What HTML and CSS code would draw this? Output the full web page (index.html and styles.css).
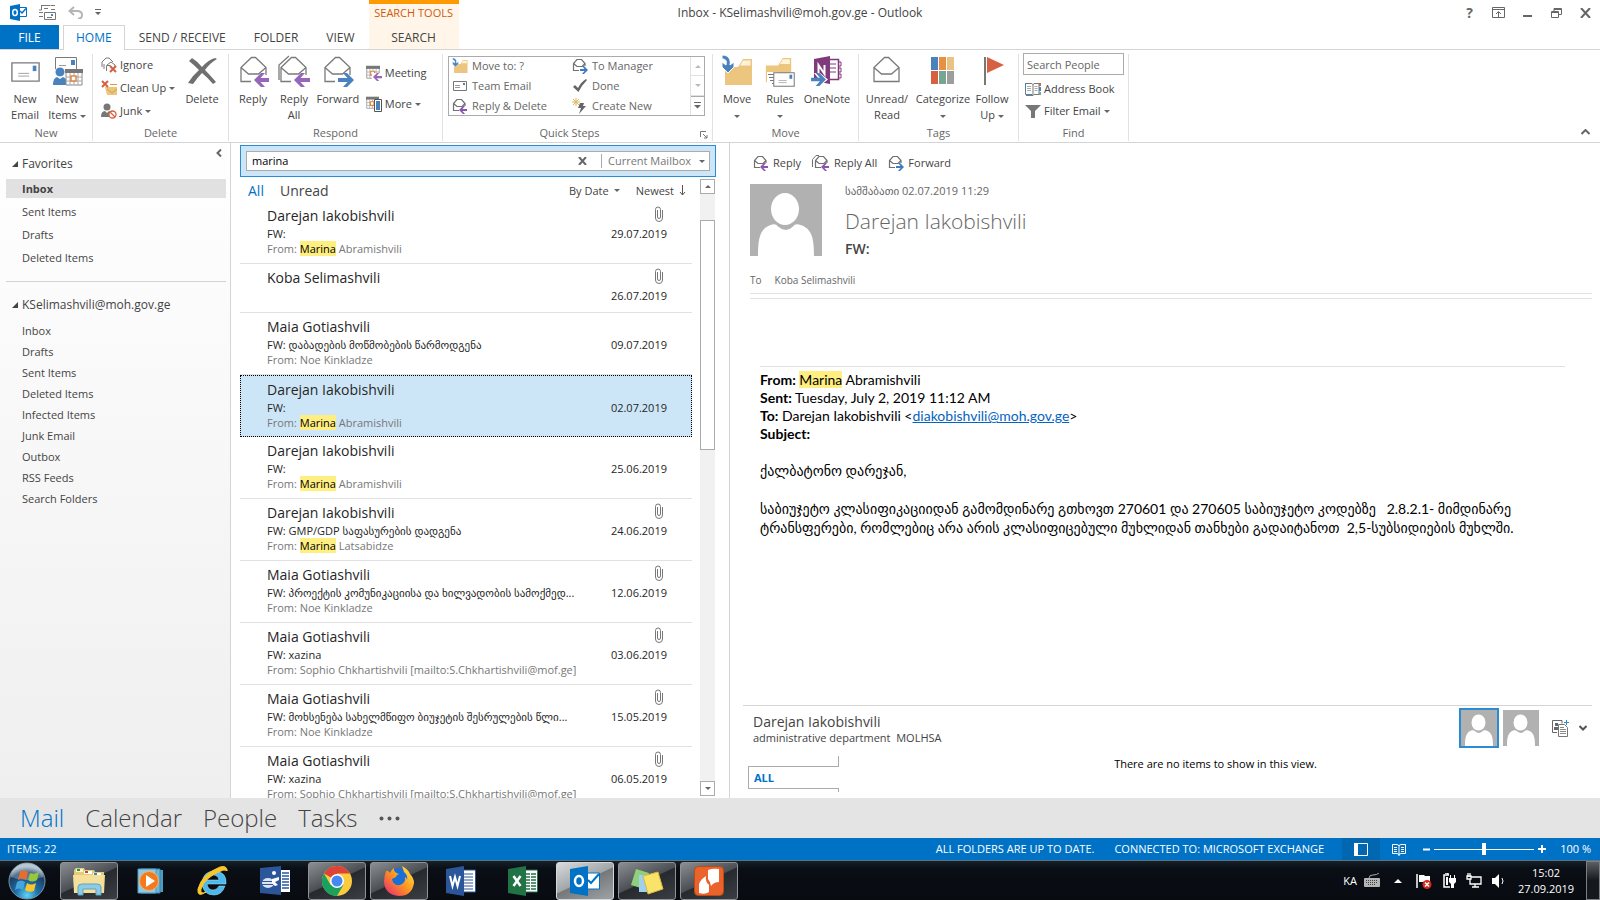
FILE: index.html
```html
<!DOCTYPE html>
<html lang="en">
<head>
    <meta charset="UTF-8">
    <meta name="viewport" content="width=device-width, initial-scale=1.0">
    <title>Inbox - KSelimashvili@moh.gov.ge - Outlook</title>
    <link rel="stylesheet" href="styles.css">
</head>
<body>
    <!-- shared icons -->
    <svg class="defs" width="0" height="0">
        <symbol id="i-open" viewBox="0 0 32 32">
            <path d="M2 12.500 12.500 2.500h4L27 12.500V26.500H2zM2 12.500l7.500 6.500h10L27 12.500" fill="#fff" stroke="#7a7a7a" stroke-width="1.300"/>
        </symbol>
        <symbol id="i-left" viewBox="0 0 16 14">
            <path d="M0 7 7 0h4L6.500 5H16v4H6.500L11 14H7z" fill="#9766bb"/>
        </symbol>
        <symbol id="i-right" viewBox="0 0 16 14">
            <path d="M16 7 9 0H5l4.500 5H0v4h9.500L5 14h4z" fill="#4a82bd"/>
        </symbol>
        <symbol id="i-reply" viewBox="0 0 32 32">
            <use href="#i-open" width="32" height="32"/>
            <path d="M12 20h20v12H12z" fill="#fff"/>
            <use href="#i-left" x="15" y="18" width="16" height="14"/>
        </symbol>
        <symbol id="i-replyall" viewBox="0 0 34 32">
            <path d="M2 25V10L12 1" fill="none" stroke="#7a7a7a" stroke-width="1.300"/>
            <use href="#i-open" x="2" width="32" height="32"/>
            <path d="M14 20h20v12H14z" fill="#fff"/>
            <use href="#i-left" x="17" y="18" width="16" height="14"/>
        </symbol>
        <symbol id="i-forward" viewBox="0 0 32 32">
            <use href="#i-open" width="32" height="32"/>
            <path d="M12 20h20v12H12z" fill="#fff"/>
            <use href="#i-right" x="15" y="18" width="16" height="14"/>
        </symbol>
        <!-- 16px envelopes -->
        <symbol id="s-open" viewBox="0 0 16 16">
            <path d="M7 12.500H1.500V5.500L5 1.500h4.500l3.500 4V8M1.500 5.500l3.500 3h5l3-3" fill="none" stroke="#707070" stroke-width="1.200"/>
        </symbol>
        <symbol id="s-reply" viewBox="0 0 16 16">
            <use href="#s-open" width="16" height="16"/>
            <path d="m7 12 4-4h2l-2.500 3H15v2h-4.500l2.500 3h-2z" fill="#8b55ae"/>
        </symbol>
        <symbol id="s-replyall" viewBox="0 0 18 16">
            <path d="M.500 12V4.500L4 .500h3" fill="none" stroke="#707070"/>
            <use href="#s-reply" x="2" width="16" height="16"/>
        </symbol>
        <symbol id="s-forward" viewBox="0 0 16 16">
            <use href="#s-open" width="16" height="16"/>
            <path d="m16 12-4-4h-2l2.500 3H8v2h4.500L10 16h2z" fill="#3f7cbc"/>
        </symbol>
        <symbol id="i-folder" viewBox="0 0 32 32">
            <path d="M2 10h13l5-8h9v26H2z" fill="#ecc57f"/>
            <path d="M17 8.500 20 3.500h7.500v5z" fill="#fff3d9"/>
        </symbol>
        <symbol id="i-moveto" viewBox="0 0 32 32">
            <use href="#i-folder" x="2" y="2" width="32" height="32"/>
            <path d="M1 0c7 0 9 5 8 10l4-3v5l-6 6-6-6V7l4 3c1-4 0-6-4-6z" fill="#4a82bd" stroke="#fff"/>
        </symbol>
        <symbol id="i-mail" viewBox="0 0 32 22">
            <path d="M1 1h30v20H1z" fill="#fff" stroke="#7a7a7a" stroke-width="1.500"/>
            <path d="M24 4h4v6h-4z" fill="#4a82bd"/>
            <path d="M8 12.500h12M8 15.500h12" stroke="#9a9a9a"/>
        </symbol>
        <symbol id="i-cal" viewBox="0 0 18 18">
            <path d="M1 2h16v15H1z" fill="#fff" stroke="#8a8a8a"/>
            <path d="M0 1h18v4H0z" fill="#777"/>
            <path d="M1 9h16M1 13h16M5 5v12M9 5v12M13 5v12" stroke="#a8a8a8"/>
            <path d="M6 8h5v5H6z" fill="#fff" stroke="#e08641" stroke-width="1.500"/>
        </symbol>
        <symbol id="i-clip" viewBox="0 0 8 16">
            <path d="M2.500 4v7a1.500 1.500 0 0 0 3 0V3.500a2.500 2.500 0 0 0-5 0V12a3.500 3.500 0 0 0 7 0V4" fill="none" stroke="#777"/>
        </symbol>
        <symbol id="i-person" viewBox="0 0 72 72">
            <path d="M0 0h72v72H0z" fill="#b1b1b1"/>
            <ellipse cx="35" cy="25" rx="14" ry="16" fill="#fff"/>
            <path d="M8 72C8 54 10 44 22 40.500q4-1 6 2 8 7 15 0 2-3 6-2C62 44 64 54 64 72z" fill="#fff"/>
        </symbol>
    </svg>

    <header class="titlebar">
        <div class="quick">
            <svg width="17" height="17" viewBox="0 0 17 17"><path d="M0 2 10 0v17L0 15z" fill="#0072c6"/><path d="M10 3.500h6.500v9H10" fill="#fff" stroke="#0072c6"/><path d="m10 7 2 2 4-4.500" fill="none" stroke="#0072c6" stroke-width="1.500"/><ellipse cx="5" cy="8.500" rx="2.300" ry="3" fill="none" stroke="#fff" stroke-width="1.500"/></svg>
            <svg width="17" height="17" viewBox="0 0 17 17" fill="#fff" stroke="#777"><path d="M2.500 1.500h9M12 1.500h4M2.500 1v5H0M12 5.500h4M5.500 8.500h11v7h-11zM0 8.500h4M0 12.500h4"/><path d="M8 13.500h5M5 4.500h4"/><path d="M12 10h2v2h-2z" fill="#4a82bd" stroke="none"/></svg>
            <svg width="15" height="13" viewBox="0 0 15 13"><path d="M6 1 1.500 5 6 9M2 5h7q5 0 5 4t-4 3.500" fill="none" stroke="#b5b5b5" stroke-width="2"/></svg>
            <svg width="6" height="7" viewBox="0 0 6 7"><path d="M0 0h6v1H0zM0 3h6L3 6z" fill="#666"/></svg>
        </div>
        <p class="title">Inbox - KSelimashvili@moh.gov.ge - Outlook</p>
        <div class="window-buttons">
            <button aria-label="Help"><b>?</b></button>
            <button aria-label="Ribbon options"><svg width="13" height="11" viewBox="0 0 13 11" fill="none" stroke="#666"><path d="M.5.5h12v10H.5zM0 2.500h13M6.500 10V5M4 7l2.500-2.500L9 7"/></svg></button>
            <button aria-label="Minimize"><svg width="9" height="11" viewBox="0 0 9 11"><path d="M0 8h9v2H0z" fill="#666"/></svg></button>
            <button aria-label="Restore"><svg width="11" height="10" viewBox="0 0 11 10" fill="none" stroke="#666"><path d="M.5 3.500h7v6h-7zM0 4.500h8M3 3V.5h7.500v6H8M3 1.500h7"/></svg></button>
            <button aria-label="Close"><svg width="11" height="10" viewBox="0 0 11 10"><path d="m1 0 9 10M10 0 1 10" stroke="#666" stroke-width="2"/></svg></button>
        </div>
    </header>

    <nav class="tabs">
        <button class="tab file">FILE</button>
        <button class="tab active">HOME</button>
        <button class="tab">SEND / RECEIVE</button>
        <button class="tab">FOLDER</button>
        <button class="tab">VIEW</button>
        <div class="context-tab">
            <span>SEARCH TOOLS</span>
            <button class="tab">SEARCH</button>
        </div>
    </nav>

    <section class="ribbon">
        <div class="group g-new">
            <div class="tools">
                <button class="big w42">
                    <svg width="32" height="34" viewBox="0 0 32 34"><use href="#i-mail" x="2" y="8" width="29" height="20"/></svg>
                    New<br>Email
                </button>
                <button class="big w42">
                    <svg width="32" height="34" viewBox="0 0 32 34"><path d="M4.500 3.500h21v14h-21z" fill="#fff" stroke="#7a7a7a"/><path d="M20 6h4v5h-4z" fill="#4a82bd"/><path d="M8 11.500h7" stroke="#999"/><circle cx="9" cy="18" r="5" fill="#4a82bd" stroke="#fff"/><path d="M2 31q0-7 4-8l3 2 3-2q4 1 4 8z" fill="#4a82bd"/><use href="#i-cal" x="14" y="14" width="18" height="18"/></svg>
                    New<br>Items <i class="down"></i>
                </button>
            </div>
            <h3>New</h3>
        </div>
        <div class="group g-delete">
            <div class="tools">
                <div class="smalls">
                    <button><svg width="16" height="16" viewBox="0 0 16 16"><path d="M1 10V5l4-4h3l4 4M3 12V7M5.500 14V8.500h4M6 8l4-3 4 3v3" fill="none" stroke="#7a7a7a"/><path d="m9 9 6 6M15 9l-6 6" stroke="#d75f42" stroke-width="2"/></svg>Ignore</button>
                    <button><svg width="16" height="16" viewBox="0 0 16 16"><path d="M4 7h12v8H6z" fill="#ecc57f"/><path d="m6 9 5 4 5-4M9 4.500h7" fill="none" stroke="#d69d45"/><path d="m1 1 6 6M7 1 1 7" stroke="#d75f42" stroke-width="2"/></svg>Clean Up<i class="down"></i></button>
                    <button><svg width="16" height="16" viewBox="0 0 16 16"><circle cx="6" cy="4" r="3.500" fill="#777"/><path d="M0 14q0-6 4-6l2 2 2-2q3 0 3 6z" fill="#777"/><circle cx="11.500" cy="11.500" r="3.500" fill="#fff" stroke="#d75f42" stroke-width="1.300"/><path d="m9 9 5 5" stroke="#d75f42" stroke-width="1.300"/></svg>Junk<i class="down"></i></button>
                </div>
                <button class="big w42">
                    <svg width="32" height="34" viewBox="0 0 32 34"><path d="m3 7 3-3q5 3 10 9Q22 6 29 4l2 1q-7 4-12 11 5 5 11 12l-3 2q-6-7-11-11-4 4-9 11l-5-1q5-8 11-13-5-5-10-9z" fill="#707070"/></svg>
                    Delete
                </button>
            </div>
            <h3>Delete</h3>
        </div>
        <div class="group g-respond">
            <div class="tools">
                <button class="big w42"><svg width="32" height="34"><use href="#i-reply" x="2" y="1" width="32" height="32"/></svg>Reply</button>
                <button class="big w42"><svg width="34" height="34"><use href="#i-replyall" y="1" width="34" height="32"/></svg>Reply<br>All</button>
                <button class="big w48"><svg width="32" height="34"><use href="#i-forward" x="1" y="1" width="32" height="32"/></svg>Forward</button>
                <div class="smalls two">
                    <button><svg width="16" height="16" viewBox="0 0 16 16"><use href="#i-cal" width="14" height="14"/><path d="M6 8h10v8H6z" fill="#fff"/><use href="#i-left" x="7" y="8" width="9" height="8"/></svg>Meeting</button>
                    <button><svg width="16" height="16" viewBox="0 0 16 16"><use href="#i-cal" width="13" height="13"/><path d="M8.500 3.500h7v12h-7z" fill="#fff" stroke="#555"/><path d="M10 5h4v9h-4z" fill="#4a82bd"/></svg>More<i class="down"></i></button>
                </div>
            </div>
            <h3>Respond</h3>
        </div>
        <div class="group g-steps">
            <div class="tools">
                <div class="gallery">
                    <div class="steps">
                        <button><svg width="16" height="16"><use href="#i-moveto" width="16" height="16"/></svg>Move to: ?</button>
                        <button><svg width="16" height="16"><use href="#s-forward"/></svg>To Manager</button>
                        <button><svg width="16" height="16" viewBox="0 0 16 16"><path d="M1.500 3.500h13v9h-13z" fill="#fff" stroke="#777"/><path d="M11 5h2v2h-2z" fill="#4a82bd"/><path d="M3 7.500h5M3 9.500h5" stroke="#999"/></svg>Team Email</button>
                        <button><svg width="16" height="16" viewBox="0 0 16 16"><path d="m1 9 2-2 3 3q3-6 8-9l1 1Q10 7 6.500 14z" fill="#666"/></svg>Done</button>
                        <button><svg width="16" height="16"><use href="#s-reply"/></svg>Reply &amp; Delete</button>
                        <button><svg width="16" height="16" viewBox="0 0 16 16"><path d="M4 0v8M0 4h8M1 1l6 6M7 1 1 7" stroke="#e2b45d"/><path d="M8 5h4l-1 3h3l-7 8 2-6H6z" fill="#666"/></svg>Create New</button>
                    </div>
                    <div class="gallery-bar">
                        <button aria-label="Up"><i class="up pale"></i></button>
                        <button aria-label="Down"><i class="down pale"></i></button>
                        <button aria-label="More steps" class="more"><svg width="7" height="7" viewBox="0 0 7 7"><path d="M0 0h7v1H0zM0 3h7L3.500 6.500z" fill="#666"/></svg></button>
                    </div>
                </div>
            </div>
            <h3>Quick Steps</h3>
            <svg class="launcher" width="8" height="8" viewBox="0 0 8 8"><path d="M.5 6V.5H6M3 3l4 4M7 4v3H4" fill="none" stroke="#777"/></svg>
        </div>
        <div class="group g-move">
            <div class="tools">
                <button class="big w48"><svg width="32" height="34"><use href="#i-moveto" y="1" width="32" height="32"/></svg>Move<br><i class="down"></i></button>
                <button class="big w38"><svg width="32" height="34" viewBox="0 0 32 34"><use href="#i-folder" x="0" y="2" width="30" height="30"/><path d="M3 18h10v14H3z" fill="#fff"/><path d="M4 20.500h8M5 23.500h7M6 26.500h6M8 29.500h4" stroke="#777"/><use href="#i-mail" x="9" y="18" width="22" height="15"/></svg>Rules<br><i class="down"></i></button>
                <button class="big w56"><svg width="32" height="34" viewBox="0 0 32 34"><path d="M15 5.500h12.500v20H15" fill="#fff" stroke="#80397b" stroke-width="1.500"/><path d="M27 8h3v4h-3M27 14h3v4h-3M27 20h3v4h-3M19 10h6M19 14h6M19 18h6" fill="none" stroke="#80397b"/><path d="M3 5 19 2v28L3 27z" fill="#80397b"/><path d="M7.500 20v-9l6 9v-9" fill="none" stroke="#fff" stroke-width="2"/><path d="M0 24h7l-4-5h6l8 6.500L9 32H3l4-4H0z" fill="#fff"/><use href="#i-right" x="0" y="19" width="15" height="13"/></svg>OneNote</button>
            </div>
            <h3>Move</h3>
        </div>
        <div class="group g-tags">
            <div class="tools">
                <button class="big w56"><svg width="30" height="34"><use href="#i-open" y="1" width="32" height="32"/></svg>Unread/<br>Read</button>
                <button class="big w56"><svg width="26" height="34" viewBox="0 0 26 34"><path d="M1 3h7v13H1z" fill="#4a82bd"/><path d="M9 3h7v13H9z" fill="#e69044"/><path d="M17 3h7v13h-7z" fill="#eac282"/><path d="M1 17h7v13H1z" fill="#d75f42"/><path d="M9 17h7v13H9z" fill="#78a591"/><path d="M17 17h7v13h-7z" fill="#9d9d9d"/></svg>Categorize<br><i class="down"></i></button>
                <button class="big w42"><svg width="24" height="34" viewBox="0 0 24 34"><path d="M4 3h2v28H4z" fill="#777"/><path d="m7 3 17 8-17 8z" fill="#d75f42"/></svg>Follow<br>Up <i class="down"></i></button>
            </div>
            <h3>Tags</h3>
        </div>
        <div class="group g-find">
            <div class="tools find">
                <input type="text" placeholder="Search People" aria-label="Search People">
                <button><svg width="16" height="15" viewBox="0 0 16 15"><path d="M.5 1.500H7l1 1 1-1h5v11H9l-1 1-1-1H.500zM8 2v11" fill="#fff" stroke="#777"/><path d="M2 4.500h4M2 6.500h4M2 8.500h4M9.500 4.500h3M9.500 6.500h3M9.500 8.500h3" stroke="#aaa"/><path d="M0 1h1v13h7v-1H1z" fill="#4a82bd"/><path d="M14 1h2v3h-2z" fill="#d75f42"/><path d="M14 5h2v4h-2z" fill="#4a82bd"/><path d="M14 10h2v3h-2z" fill="#78a591"/></svg>Address Book</button>
                <button><svg width="16" height="15" viewBox="0 0 16 15"><path d="M0 1h16l-6 6v7H6V7z" fill="#777"/></svg>Filter Email<i class="down"></i></button>
            </div>
            <h3>Find</h3>
        </div>
        <button class="collapse" aria-label="Collapse the ribbon"><svg width="9" height="6" viewBox="0 0 9 6"><path d="m.5 5 4-4 4 4" fill="none" stroke="#666" stroke-width="2"/></svg></button>
    </section>

    <main class="panes">
        <aside class="folders">
            <button class="fold" aria-label="Minimize the folder pane"><svg width="6" height="8" viewBox="0 0 6 8"><path d="M5 .5 1.500 4 5 7.500" fill="none" stroke="#666" stroke-width="2"/></svg></button>
            <h2>Favorites</h2>
            <ul class="favorites">
                <li><a href="#" class="current">Inbox</a></li>
                <li><a href="#">Sent Items</a></li>
                <li><a href="#">Drafts</a></li>
                <li><a href="#">Deleted Items</a></li>
            </ul>
            <h2 class="account">KSelimashvili@moh.gov.ge</h2>
            <ul>
                <li><a href="#">Inbox</a></li>
                <li><a href="#">Drafts</a></li>
                <li><a href="#">Sent Items</a></li>
                <li><a href="#">Deleted Items</a></li>
                <li><a href="#">Infected Items</a></li>
                <li><a href="#">Junk Email</a></li>
                <li><a href="#">Outbox</a></li>
                <li><a href="#">RSS Feeds</a></li>
                <li><a href="#">Search Folders</a></li>
            </ul>
        </aside>

        <section class="list">
            <div class="search">
                <div class="search-box">
                    <input type="text" value="marina" aria-label="Search mailbox">
                    <button aria-label="Clear search"><svg width="9" height="8" viewBox="0 0 9 8"><path d="m1 0 7 8M8 0 1 8" stroke="#666" stroke-width="2"/></svg></button>
                    <select aria-label="Search scope"><option>Current Mailbox</option></select>
                    <i class="down"></i>
                </div>
            </div>
            <div class="list-body">
                <div class="list-main">
                    <div class="filters">
                        <button class="filter on">All</button>
                        <button class="filter">Unread</button>
                        <button class="sort">By Date <i class="down"></i></button>
                        <button class="sort">Newest <svg width="7" height="11" viewBox="0 0 7 11"><path d="M3.500 0v10M1 7l2.500 3L6 7" fill="none" stroke="#555"/></svg></button>
                    </div>
                    <ul class="messages">
                        <li>
                            <h4>Darejan Iakobishvili</h4><svg class="clip"><use href="#i-clip"/></svg>
                            <p class="subject">FW:</p><time>29.07.2019</time>
                            <p class="preview">From: <mark>Marina</mark> Abramishvili</p>
                        </li>
                        <li class="short">
                            <h4>Koba Selimashvili</h4><svg class="clip"><use href="#i-clip"/></svg>
                            <p class="subject"></p><time>26.07.2019</time>
                        </li>
                        <li>
                            <h4>Maia Gotiashvili</h4>
                            <p class="subject">FW: დაბადების მოწმობების წარმოდგენა</p><time>09.07.2019</time>
                            <p class="preview">From: Noe Kinkladze</p>
                        </li>
                        <li class="selected">
                            <h4>Darejan Iakobishvili</h4>
                            <p class="subject">FW:</p><time>02.07.2019</time>
                            <p class="preview">From: <mark>Marina</mark> Abramishvili</p>
                        </li>
                        <li>
                            <h4>Darejan Iakobishvili</h4>
                            <p class="subject">FW:</p><time>25.06.2019</time>
                            <p class="preview">From: <mark>Marina</mark> Abramishvili</p>
                        </li>
                        <li>
                            <h4>Darejan Iakobishvili</h4><svg class="clip"><use href="#i-clip"/></svg>
                            <p class="subject">FW: GMP/GDP საფასურების დადგენა</p><time>24.06.2019</time>
                            <p class="preview">From: <mark>Marina</mark> Latsabidze</p>
                        </li>
                        <li>
                            <h4>Maia Gotiashvili</h4><svg class="clip"><use href="#i-clip"/></svg>
                            <p class="subject">FW: პროექტის კომუნიკაციისა და ხილვადობის სამოქმედ...</p><time>12.06.2019</time>
                            <p class="preview">From: Noe Kinkladze</p>
                        </li>
                        <li>
                            <h4>Maia Gotiashvili</h4><svg class="clip"><use href="#i-clip"/></svg>
                            <p class="subject">FW: xazina</p><time>03.06.2019</time>
                            <p class="preview">From: Sophio Chkhartishvili [mailto:S.Chkhartishvili@mof.ge]</p>
                        </li>
                        <li>
                            <h4>Maia Gotiashvili</h4><svg class="clip"><use href="#i-clip"/></svg>
                            <p class="subject">FW: მოხსენება სახელმწიფო ბიუჯეტის შესრულების წლი...</p><time>15.05.2019</time>
                            <p class="preview">From: Noe Kinkladze</p>
                        </li>
                        <li>
                            <h4>Maia Gotiashvili</h4><svg class="clip"><use href="#i-clip"/></svg>
                            <p class="subject">FW: xazina</p><time>06.05.2019</time>
                            <p class="preview">From: Sophio Chkhartishvili [mailto:S.Chkhartishvili@mof.ge]</p>
                        </li>
                    </ul>
                </div>
                <div class="scrollbar">
                    <button aria-label="Scroll up"><i class="up"></i></button>
                    <div class="track"><div class="thumb"></div></div>
                    <button aria-label="Scroll down"><i class="down"></i></button>
                </div>
            </div>
        </section>

        <section class="reading">
            <div class="actions">
                <button><svg width="16" height="16"><use href="#s-reply"/></svg>Reply</button>
                <button><svg width="18" height="16"><use href="#s-replyall"/></svg>Reply All</button>
                <button><svg width="16" height="16"><use href="#s-forward"/></svg>Forward</button>
            </div>
            <div class="sender">
                <svg width="72" height="72"><use href="#i-person"/></svg>
                <div>
                    <p class="sent">სამშაბათი 02.07.2019 11:29</p>
                    <h1>Darejan Iakobishvili</h1>
                    <p class="fw">FW:</p>
                </div>
            </div>
            <p class="to"><span>To</span>Koba Selimashvili</p>
            <article class="message">
                <div class="headers">
                    <p><b>From:</b> <mark>Marina</mark> Abramishvili</p>
                    <p><b>Sent:</b> Tuesday, July 2, 2019 11:12 AM</p>
                    <p><b>To:</b> Darejan Iakobishvili &lt;<a href="#">diakobishvili@moh.gov.ge</a>&gt;</p>
                    <p><b>Subject:</b></p>
                </div>
                <p lang="ka">ქალბატონო დარეჯან,</p>
                <p lang="ka">საბიუჯეტო კლასიფიკაციიდან გამომდინარე გთხოვთ 270601 და 270605 საბიუჯეტო კოდებზე &nbsp; 2.8.2.1- მიმდინარე<br>ტრანსფერები, რომლებიც არა არის კლასიფიცებული მუხლიდან თანხები გადაიტანოთ &nbsp;2,5-სუბსიდიების მუხლში.</p>
            </article>
            <footer class="people">
                <div class="people-head">
                    <div class="who">
                        <h4>Darejan Iakobishvili</h4>
                        <p>administrative department&nbsp; MOLHSA</p>
                    </div>
                    <svg class="face on"><use href="#i-person"/></svg>
                    <svg class="face"><use href="#i-person"/></svg>
                    <svg width="17" height="17" viewBox="0 0 17 17"><path d="M10 3.500V.5H.5v12H5" fill="none" stroke="#666"/><path d="M3 3h3v3H3zM2 7h4v3H2z" fill="#666"/><path d="M6.500 4.500h6l3 3v9h-9z" fill="#fff" stroke="#777"/><path d="M8 7.500h4M8 9.500h6M8 11.500h6M8 13.500h6" stroke="#888"/><path d="M12 2.500h5M14.500 0v5" stroke="#2a8dd4"/></svg>
                    <button aria-label="Expand people pane"><svg width="8" height="6" viewBox="0 0 8 6"><path d="m.5 1 3.500 3.500L7.500 1" fill="none" stroke="#555" stroke-width="2"/></svg></button>
                </div>
                <div class="people-body">
                    <div class="people-tabs">
                        <button class="all">ALL</button>
                    </div>
                    <p>There are no items to show in this view.</p>
                </div>
            </footer>
        </section>
    </main>

    <nav class="modules">
        <a href="#" class="on">Mail</a>
        <a href="#">Calendar</a>
        <a href="#">People</a>
        <a href="#">Tasks</a>
        <button aria-label="More"><svg width="21" height="5" viewBox="0 0 21 5" fill="#555"><circle cx="2.500" cy="2.500" r="2"/><circle cx="10.500" cy="2.500" r="2"/><circle cx="18.500" cy="2.500" r="2"/></svg></button>
    </nav>

    <div class="status">
        <span class="items">ITEMS: 22</span>
        <span>ALL FOLDERS ARE UP TO DATE.</span>
        <span class="conn">CONNECTED TO: MICROSOFT EXCHANGE</span>
        <button class="view on" aria-label="Normal view"><svg width="14" height="13" viewBox="0 0 14 13"><path d="M.5.5h13v12H.5z" fill="none" stroke="#fff"/><path d="M0 0h4v13H0z" fill="#fff"/></svg></button>
        <button class="view" aria-label="Reading view"><svg width="14" height="13" viewBox="0 0 14 13" fill="none" stroke="#fff"><path d="M.5 1.500H5l2 1 2-1h4.500v9H9l-2 1-2-1H.5zM7 2v11M2 4.500h3M2 6.500h3M2 8.500h3M9 4.500h3M9 6.500h3M9 8.500h3"/></svg></button>
        <div class="zoom">
            <button aria-label="Zoom out"><svg width="7" height="7" viewBox="0 0 7 7"><path d="M0 2.500h7v2H0z" fill="#fff"/></svg></button>
            <input type="range" min="0" max="100" value="50" aria-label="Zoom">
            <button aria-label="Zoom in"><svg width="8" height="8" viewBox="0 0 8 8"><path d="M0 3h8v2H0zM3 0h2v8H3z" fill="#fff"/></svg></button>
        </div>
        <span>100 %</span>
    </div>

    <footer class="taskbar">
        <button class="start" aria-label="Start">
            <svg width="40" height="38" viewBox="0 0 40 38">
                <defs><radialGradient id="orb" cx=".5" cy=".9" r=".8"><stop offset="0" stop-color="#5fd4f5"/><stop offset=".4" stop-color="#1f6ea8"/><stop offset=".8" stop-color="#1b3f63"/><stop offset="1" stop-color="#9fb6c6"/></radialGradient></defs>
                <circle cx="20" cy="19" r="18" fill="url(#orb)" stroke="#7895a6"/>
                <path d="M4 15a16 14 0 0 1 32 0q-16 6-32 0z" fill="#fff" opacity=".25"/>
                <path d="M13 10q4-3 8 0l-2 8q-4-3-8 0z" fill="#ec6a2c"/><path d="M23 11q4 2 9-1l-2 8q-5 3-9 0z" fill="#94c83d"/>
                <path d="M10 20q4-3 8 0l-2 8q-4-3-8 0z" fill="#46a5dc"/><path d="M20 21q4 3 9 0l-2 8q-5 2-9-1z" fill="#fbc52d"/>
            </svg>
        </button>
        <button class="task open" aria-label="Explorer">
            <svg width="34" height="30" viewBox="0 0 34 30"><path d="M2 4 4 2h8l1 2h9l1 2h9v21H2z" fill="#e5cb76"/><path d="M4 3h7v3H4z" fill="#f7f3dc"/><path d="M5 3h3v2H5z" fill="#18a13a"/><path d="M12 5h8v3h-8z" fill="#fff"/><path d="M13 5h3v2h-3z" fill="#d2452f"/><path d="M21 7h8v3h-8z" fill="#fff"/><path d="M22 7h3v2h-3z" fill="#2a8fd0"/><path d="M1 9h32l-1 18H2z" fill="#f4e09b"/><path d="M6 29v-8q0-3 4-3h15q4 0 4 3v8h-5v-6H11v6z" fill="#8dcbe6" stroke="#5ba5c6"/></svg>
        </button>
        <button class="task" aria-label="Media Player">
            <svg width="28" height="28" viewBox="0 0 28 28"><path d="M8 3h18v22H8z" fill="#4b9cc4"/><path d="M4 2h19v24H4z" fill="#6db7d9" stroke="#3d86ac"/><path d="M1 2h18v24H1z" fill="#8fc9e4" stroke="#4e99bd"/><circle cx="12" cy="14" r="9.500" fill="#f27a1c" stroke="#fbb06d"/><path d="m9 8 9 6-9 6z" fill="#fff"/></svg>
        </button>
        <button class="task" aria-label="Internet Explorer">
            <svg width="32" height="32" viewBox="0 0 32 32"><path d="M28 21h-6q-2 4-6 4-5 0-6-6h19Q30 7 18 6 6 6 5 18q1 12 12 12 8 0 11-9zM10 15q1-5 6-5 5 0 6 5z" fill="#4bb8ee" stroke="#b5e5fb" stroke-width=".5"/><path d="M24 5q6-4 6 1-1-3-6 0Q8 12 4 24q-1 6 5 3-9 6-8-3Q5 9 23 2q7-2 7 4" fill="#f6c62c" stroke="#f6c62c"/></svg>
        </button>
        <button class="task" aria-label="Dictionary">
            <svg width="32" height="30" viewBox="0 0 32 30"><path d="M21 4h10v22H21z" fill="#fff"/><path d="M23 7h7M23 10h7M23 13h7M23 16h7M23 19h7M23 22h7" stroke="#2b579a" stroke-width="1.500"/><path d="M1 2 22 0v29L1 27z" fill="#2b579a"/><ellipse cx="9" cy="17" rx="6" ry="5" fill="#dbe5f4"/><path d="M3 15.500h11M3 18.500h11" stroke="#2b579a"/><path d="m13 13 7-2v3l-4 2 3 3-3 1-3-3z" fill="#fff"/><circle cx="15" cy="7" r="2" fill="#fff"/></svg>
        </button>
        <button class="task open" aria-label="Chrome">
            <svg width="30" height="30" viewBox="0 0 30 30"><circle cx="15" cy="15" r="15" fill="#fcca3f"/><path d="M15 15 2 7.500A15 15 0 0 1 28 7.500H15z" fill="#dc4437"/><path d="M2 7.500A15 15 0 0 0 15 30l6.500-11.300L15 15 8.500 18.700z" fill="#1aa15f"/><circle cx="15" cy="15" r="7" fill="#fff"/><circle cx="15" cy="15" r="5.500" fill="#4587f3"/></svg>
        </button>
        <button class="task open" aria-label="Firefox">
            <svg width="32" height="32" viewBox="0 0 32 32"><defs><linearGradient id="fox" x1="1" x2="0" y1="0" y2="1"><stop offset="0" stop-color="#fff04a"/><stop offset=".5" stop-color="#ff9320"/><stop offset="1" stop-color="#e3207e"/></linearGradient></defs><circle cx="16" cy="14" r="11" fill="#1a6fd6"/><path d="M3 6q2-1 4 2 1-3 4-5-1 4 5 6-3 1-3 3l-4 2q1 7 8 6 6-2 5-8 2 1 2 3 1-5-3-8l-2-6q6 3 8 8 4 4 4 9-2 13-15 13Q2 30 1 17q0-6 2-11z" fill="url(#fox)"/></svg>
        </button>
        <button class="task" aria-label="Word">
            <svg width="30" height="30" viewBox="0 0 30 30"><path d="M16 4h13.500v22H16z" fill="#fff" stroke="#2b579a"/><path d="M18 8h9M18 11h9M18 14h9M18 17h9M18 20h9M18 23h9" stroke="#2b579a"/><path d="M0 3 18 0v30L0 27z" fill="#2b579a"/><path d="m4 10 2.500 10L9 11l2.500 9L14 10" fill="none" stroke="#fff" stroke-width="2"/></svg>
        </button>
        <button class="task" aria-label="Excel">
            <svg width="30" height="30" viewBox="0 0 30 30"><path d="M16 4h13.500v22H16z" fill="#fff" stroke="#217346"/><path d="M18 8h4M23 8h5M18 11h4M23 11h5M18 14h4M23 14h5M18 17h4M23 17h5M18 20h4M23 20h5M18 23h4M23 23h5" stroke="#217346" stroke-width="1.500"/><path d="M0 3 18 0v30L0 27z" fill="#217346"/><path d="m5.500 10 7 10M12.500 10l-7 10" stroke="#fff" stroke-width="2.500"/></svg>
        </button>
        <button class="task open front" aria-label="Outlook">
            <svg width="30" height="30" viewBox="0 0 30 30"><path d="M16 7h13.500v16H16z" fill="#fff" stroke="#0072c6"/><path d="m18 14 3 3 8-9" fill="none" stroke="#0072c6" stroke-width="2"/><path d="M0 3 18 0v30L0 27z" fill="#0072c6"/><ellipse cx="9" cy="15" rx="4" ry="5" fill="none" stroke="#fff" stroke-width="2.500"/></svg>
        </button>
        <button class="task open" aria-label="Sticky Notes">
            <svg width="34" height="28" viewBox="0 0 34 28"><path d="m6 2 13 4-5 16-13-4z" fill="#8fd07a"/><path d="M9 8h15v17H9z" fill="#9fd0ef"/><path d="m13 9 15-4 5 17-15 5z" fill="#f9e36b" stroke="#d8b93c"/></svg>
        </button>
        <button class="task open" aria-label="Nitro">
            <svg width="30" height="30" viewBox="0 0 30 30"><rect x=".5" y=".5" width="29" height="29" rx="4" fill="#e9632a" stroke="#b94a1a"/><path d="M14 4q5-2 11-1v13q-5 0-8 4-1-5-3-7zM15 26q-4 3-10 1V18q2-5 7-8-1 6 3 9z" fill="#fff"/></svg>
        </button>
        <div class="tray">
            <span>KA</span>
            <svg width="16" height="15" viewBox="0 0 16 15"><path d="M5 5q0-3 4-3t6-2" fill="none" stroke="#aaa"/><rect y="5" width="16" height="9" rx="1" fill="#b5b5b5"/><path d="M2 7.500h12M2 9.500h12M4 11.500h8" stroke="#444" stroke-dasharray="1 1"/></svg>
            <i class="up light"></i>
            <svg width="16" height="16" viewBox="0 0 16 16"><path d="M1 1v14" stroke="#fff" stroke-width="1.500"/><path d="M3 2h5l1 1h5v7H9L8 9H3z" fill="#fff"/><circle cx="11" cy="11.500" r="4.500" fill="#d6281d"/><path d="m9 9.500 4 4M13 9.500l-4 4" stroke="#fff" stroke-width="1.500"/></svg>
            <svg width="14" height="15" viewBox="0 0 14 15"><path d="M7 2H2v12h6M3 0h3v2" fill="none" stroke="#fff" stroke-width="1.500"/><path d="M4 4h2v8H4zM7 5h7v4l-2 2v4H9v-4L7 9zM8 2h1v3H8zM12 2h1v3h-1z" fill="#fff"/></svg>
            <svg width="16" height="15" viewBox="0 0 16 15"><path d="M5 4h10v7H4V6M2 0v4M4 0v4M1 3h4v3H1zM9 11v3M6 14h7" fill="none" stroke="#fff" stroke-width="1.300"/></svg>
            <svg width="14" height="14" viewBox="0 0 14 14"><path d="M0 4h3l4-4v14L3 10H0z" fill="#fff"/><path d="M10 4q2 3 0 6" fill="none" stroke="#fff"/></svg>
        </div>
        <div class="clock">15:02<br>27.09.2019</div>
        <button class="desktop" aria-label="Show desktop"></button>
    </footer>
</body>
</html>
```

FILE: styles.css
```css
* {
    margin: 0;
    padding: 0;
    box-sizing: border-box;
}

body {
    display: flex;
    flex-direction: column;
    height: 100vh;
    overflow: hidden;
    font-family: "Open Sans", "DejaVu Sans", sans-serif;
    font-size: 11px;
    line-height: 16px;
    color: #444;
    background-color: #fff;
}

button, input, select {
    font: inherit;
    color: inherit;
    background: none;
    border: none;
    outline: none;
}

h1, h2, h3, h4 {
    font-weight: 400;
}

ul {
    list-style: none;
}

a {
    color: inherit;
    text-decoration: none;
}

svg {
    flex: none;
}

mark {
    color: #000;
    background-color: #ffee80;
}

.defs {
    position: absolute;
}

/* little triangles */
.down, .up {
    display: inline-block;
    flex: none;
    border: 3px solid transparent;
}

.down {
    border-top-color: #666;
    border-bottom-width: 0;
}

.up {
    border-bottom-color: #666;
    border-top-width: 0;
}

.down.pale {
    border-top-color: #bbb;
}

.up.pale {
    border-bottom-color: #bbb;
}

.up.light {
    border-width: 0 4px 4px;
    border-bottom-color: #fff;
}

/* title bar and tabs */
.titlebar {
    display: grid;
    grid-template-columns: 1fr auto 1fr;
    align-items: center;
    height: 25px;
    flex: none;
}

.quick {
    display: flex;
    align-items: center;
    gap: 12px;
    padding-left: 10px;
}

.title {
    font-size: 12px;
}

.window-buttons {
    display: flex;
    justify-content: flex-end;
    align-items: center;
}

.window-buttons button {
    width: 29px;
    height: 20px;
    font-size: 14px;
    color: #666;
}

.tabs {
    display: flex;
    height: 25px;
    flex: none;
    border-bottom: 1px solid #d4d4d4;
}

.tab {
    padding: 1px 14px 0;
    font-size: 12px;
}

.tab.file {
    width: 59px;
    margin-right: 4px;
    color: #fff;
    background-color: #0072c6;
}

.tab.active {
    height: 25px;
    padding: 0 12px;
    color: #0072c6;
    background-color: #fff;
    border: 1px solid #d4d4d4;
    border-bottom: none;
}

.context-tab {
    display: flex;
    flex-direction: column;
    justify-content: space-between;
    align-items: center;
    width: 90px;
    height: 49px;
    margin-top: -25px;
    border-top: 4px solid #ff9900;
    background-color: #fff6e9;
}

.context-tab span {
    padding-top: 1px;
    color: #d05a0a;
}

.context-tab .tab {
    height: 24px;
}

/* ribbon */
.ribbon {
    display: flex;
    height: 93px;
    flex: none;
    padding-top: 4px;
    border-bottom: 1px solid #d4d4d4;
}

.group {
    position: relative;
    display: flex;
    flex-direction: column;
    justify-content: space-between;
    height: 87px;
    border-right: 1px solid #e1e1e1;
}

.group h3 {
    font-size: 11px;
    text-align: center;
    color: #666;
}

.g-new { width: 93px; }
.g-delete { width: 136px; }
.g-respond { width: 214px; }
.g-steps { width: 270px; }
.g-move { width: 146px; }
.g-tags { width: 160px; }
.g-find { width: 110px; }

.tools {
    display: flex;
    align-items: flex-start;
    padding-left: 4px;
}

.g-move .tools, .g-tags .tools {
    padding-left: 0;
}

.big {
    display: block;
    white-space: nowrap;
    text-align: center;
}

.big svg {
    display: block;
    margin: 0 auto 3px;
}

.big .down {
    vertical-align: middle;
}

.w38 { width: 38px; }
.w42 { width: 42px; }
.w48 { width: 48px; }
.w56 { width: 56px; }

.smalls {
    display: flex;
    flex-direction: column;
    gap: 7px;
    width: 84px;
    padding: 3px 0 0 4px;
}

.smalls.two {
    gap: 15px;
    padding-top: 11px;
}

.smalls button, .find button, .steps button {
    display: flex;
    align-items: center;
    gap: 3px;
    height: 16px;
    white-space: nowrap;
}

.g-respond .tools {
    gap: 1px;
}

.g-steps .tools {
    padding: 2px 0 0 5px;
}

.g-steps h3 {
    padding-right: 16px;
}

.gallery {
    display: flex;
    width: 257px;
    height: 60px;
    border: 1px solid #ababab;
}

.steps {
    display: grid;
    grid-template-columns: 120px 1fr;
    flex: 1;
    align-content: space-between;
    padding-left: 3px;
    color: #666;
}

.steps button {
    gap: 4px;
    height: 18px;
}

.gallery-bar {
    display: grid;
    grid-template-rows: 1fr 1fr 1fr;
    width: 14px;
    border-left: 1px solid #e1e1e1;
}

.gallery-bar button {
    display: grid;
    place-items: center;
    border-bottom: 1px solid #e1e1e1;
}

.gallery-bar .more {
    border: 1px solid #ababab;
    border-width: 1px 0 0;
}

.launcher {
    position: absolute;
    right: 4px;
    bottom: 2px;
}

.find {
    flex-direction: column;
    gap: 6px;
    padding: 0 4px;
    margin-top: -1px;
}

.find input {
    width: 101px;
    height: 22px;
    padding: 0 3px;
    border: 1px solid #ababab;
}

.find input::placeholder {
    color: #666;
}

.find button {
    padding-left: 2px;
}

.collapse {
    align-self: flex-end;
    margin: 0 10px 3px auto;
}

/* main area */
.panes {
    display: flex;
    flex: 1;
    min-height: 0;
    background-color: #fff;
}

.folders {
    position: relative;
    width: 231px;
    flex: none;
    padding: 12px 4px 0 6px;
    border-right: 1px solid #d4d4d4;
    background: linear-gradient(#fff, #efefef);
}

.fold {
    position: absolute;
    top: 2px;
    right: 8px;
}

.folders h2 {
    display: flex;
    align-items: center;
    gap: 4px;
    height: 18px;
    padding-left: 6px;
    font-size: 12px;
}

.folders h2::before {
    content: "";
    border: 3px solid transparent;
    border-right-color: #444;
    border-bottom-color: #444;
}

.folders li a {
    display: block;
    height: 21px;
    padding-left: 16px;
    line-height: 21px;
}

.favorites {
    padding: 6px 0 10px;
    border-bottom: 1px solid #d4d4d4;
}

.favorites li a {
    height: 19px;
    margin-bottom: 4px;
    line-height: 19px;
}

.favorites .current {
    font-weight: 700;
    background-color: #e1e1e1;
}

.folders .account {
    margin: 14px 0 6px;
}

.list {
    display: flex;
    flex-direction: column;
    width: 499px;
    flex: none;
    padding: 2px 13px 0 9px;
    border-right: 1px solid #d4d4d4;
}

.search {
    height: 32px;
    flex: none;
    padding: 5px;
    border: 1px solid #2a8dd4;
    background-color: #cde6f7;
}

.search-box {
    display: flex;
    align-items: center;
    height: 20px;
    padding-right: 4px;
    border: 1px solid #ababab;
    background-color: #fff;
}

.search-box input {
    flex: 1;
    min-width: 0;
    padding-left: 5px;
    color: #000;
}

.search-box button {
    display: flex;
    margin-right: 14px;
}

.search-box select {
    width: 98px;
    padding-left: 6px;
    border-left: 1px solid #ababab;
    line-height: 14px;
    color: #777;
    appearance: none;
}

.list-body {
    display: flex;
    flex: 1;
    gap: 8px;
    min-height: 0;
    padding-right: 1px;
}

.list-main {
    flex: 1;
    min-width: 0;
    overflow: hidden;
}

.filters {
    display: flex;
    align-items: center;
    gap: 16px;
    height: 25px;
    padding: 2px 6px 0 8px;
}

.filter {
    font-size: 14px;
}

.filter.on {
    color: #0072c6;
}

.sort {
    display: flex;
    align-items: center;
    gap: 5px;
}

.filter + .sort {
    margin-left: auto;
}

.messages li {
    display: grid;
    grid-template-columns: 1fr 70px;
    grid-template-rows: 20px 15px 15px;
    height: 62px;
    padding: 4px 25px 0 27px;
    border-bottom: 1px solid #e1e1e1;
    color: #262626;
}

.messages li.short {
    height: 49px;
}

.messages h4 {
    grid-column: 1;
    font-size: 14px;
    line-height: 20px;
}

.clip {
    grid-column: 2;
    justify-self: end;
    width: 8px;
    height: 16px;
    margin-right: 4px;
}

.subject, .preview {
    grid-column: 1;
    overflow: hidden;
    white-space: nowrap;
    line-height: 15px;
}

.messages time {
    grid-column: 2;
    text-align: right;
    line-height: 15px;
}

.messages .preview {
    color: #777;
}

.messages .selected {
    border: 1px dotted #000;
    padding: 4px 24px 0 26px;
    background-color: #cde6f7;
}

.scrollbar {
    display: flex;
    flex-direction: column;
    width: 15px;
    padding: 2px 0;
    background-clip: content-box;
    background-color: #f1f1f1;
}

.scrollbar button {
    display: grid;
    place-items: center;
    height: 15px;
    border: 1px solid #ababab;
    background-color: #fff;
}

.track {
    flex: 1;
    padding-top: 26px;
}

.thumb {
    height: 41%;
    border: 1px solid #ababab;
    background-color: #fff;
}

/* reading pane */
.reading {
    display: flex;
    flex-direction: column;
    flex: 1;
    min-width: 0;
    padding: 12px 8px 0 20px;
}

.actions {
    display: flex;
    gap: 11px;
    height: 16px;
    padding-left: 3px;
}

.actions button {
    display: flex;
    align-items: center;
    gap: 4px;
}

.sender {
    display: flex;
    gap: 23px;
    margin-top: 13px;
    color: #666;
}

.sent {
    line-height: 14px;
}

.sender h1 {
    margin-top: 6px;
    font-size: 21px;
    font-weight: 300;
    line-height: 34px;
}

.fw {
    font-size: 14px;
    font-weight: 600;
    line-height: 22px;
    color: #444;
}

.to {
    height: 34px;
    padding-top: 12px;
    border-bottom: 1px solid #e1e1e1;
    font-size: 10px;
    color: #666;
}

.to span {
    margin-right: 13px;
}

.message {
    flex: 1;
    margin-top: 4px;
    padding: 67px 27px 0 10px;
    border-top: 1px solid #e1e1e1;
    font-family: Lato, "DejaVu Sans", sans-serif;
    font-size: 14px;
    line-height: 19px;
    color: #000;
}

.message > p {
    margin-bottom: 19px;
    white-space: nowrap;
}

.headers {
    margin-bottom: 18px;
    padding-top: 4px;
    border-top: 1px solid #e1e1e1;
    line-height: 18px;
}

.headers a {
    color: #0563c1;
    text-decoration: underline;
}

.people {
    height: 93px;
    margin-left: -7px;
    border-top: 1px solid #d4d4d4;
}

.people-head {
    display: flex;
    align-items: center;
    gap: 4px;
    height: 44px;
    padding: 0 5px 0 10px;
}

.who {
    flex: 1;
    padding-top: 4px;
}

.who h4 {
    font-size: 14px;
}

.face {
    width: 36px;
    height: 36px;
}

.face.on {
    width: 40px;
    height: 40px;
    border: 2px solid #2a8dd4;
}

.face + svg:not(.face) {
    margin: 0 6px 0 9px;
}

.people-head button {
    display: flex;
}

.people-body {
    display: flex;
    padding: 6px 0 0 5px;
    color: #000;
}

.people-tabs {
    width: 91px;
    height: 36px;
    padding: 10px 0 3px;
    border-right: 1px solid #ababab;
}

.all {
    display: block;
    width: 91px;
    height: 23px;
    padding-left: 5px;
    border: 1px solid #ababab;
    border-right: none;
    font-weight: 700;
    text-align: left;
    color: #0072c6;
    background-color: #fff;
}

.people-body p {
    flex: 1;
    text-align: center;
}

/* bottom bars */
.modules {
    display: flex;
    align-items: center;
    gap: 21px;
    height: 40px;
    flex: none;
    padding-left: 20px;
    font-size: 24px;
    font-weight: 300;
    background-color: #e4e4e4;
}

.modules .on {
    color: #0072c6;
}

.modules button {
    display: flex;
}

.status {
    display: flex;
    align-items: center;
    height: 22px;
    flex: none;
    padding: 0 9px 0 7px;
    color: #fff;
    background-color: #0072c6;
}

.items {
    flex: 1;
}

.conn {
    margin: 0 18px 0 20px;
}

.view {
    display: grid;
    place-items: center;
    width: 38px;
    height: 22px;
}

.view.on {
    background-color: #0067b0;
}

.zoom {
    display: flex;
    align-items: center;
    margin: 0 14px 0 5px;
    gap: 4px;
}

.zoom button {
    display: flex;
}

.zoom input {
    width: 100px;
    height: 14px;
    appearance: none;
    background: linear-gradient(#fff, #fff) center / 100% 1px no-repeat;
}

.zoom input::-webkit-slider-thumb {
    width: 4px;
    height: 12px;
    appearance: none;
    background-color: #fff;
}

.taskbar {
    display: flex;
    align-items: center;
    gap: 4px;
    height: 40px;
    flex: none;
    border-top: 1px solid #61727c;
    background: linear-gradient(#15212b, #0a0e15 20%, #080b10);
    color: #fff;
}

.start {
    width: 56px;
    height: 38px;
    padding-left: 7px;
    text-align: left;
}

.task {
    display: grid;
    place-items: center;
    width: 58px;
    height: 38px;
    border: 1px solid transparent;
    border-radius: 3px;
}

.task.open {
    border-color: #8f9397;
    background: linear-gradient(155deg, #8b8e92, #4b4e52 48%, #26292d 50%, #3b3e42);
}

.task.front {
    border-color: #d5d8da;
    background: linear-gradient(155deg, #d8dadc, #a2a6a9 48%, #74787b 50%, #9fa3a6);
}

.tray {
    display: flex;
    align-items: center;
    gap: 10px;
    margin-left: auto;
}

.tray span {
    margin-right: -3px;
}

.tray .up {
    margin: 0 4px;
}

.clock {
    width: 72px;
    text-align: center;
}

.desktop {
    width: 14px;
    height: 39px;
    border: 1px solid #7b8085;
    background: linear-gradient(#5b5f64, #15181c 50%);
}
```
